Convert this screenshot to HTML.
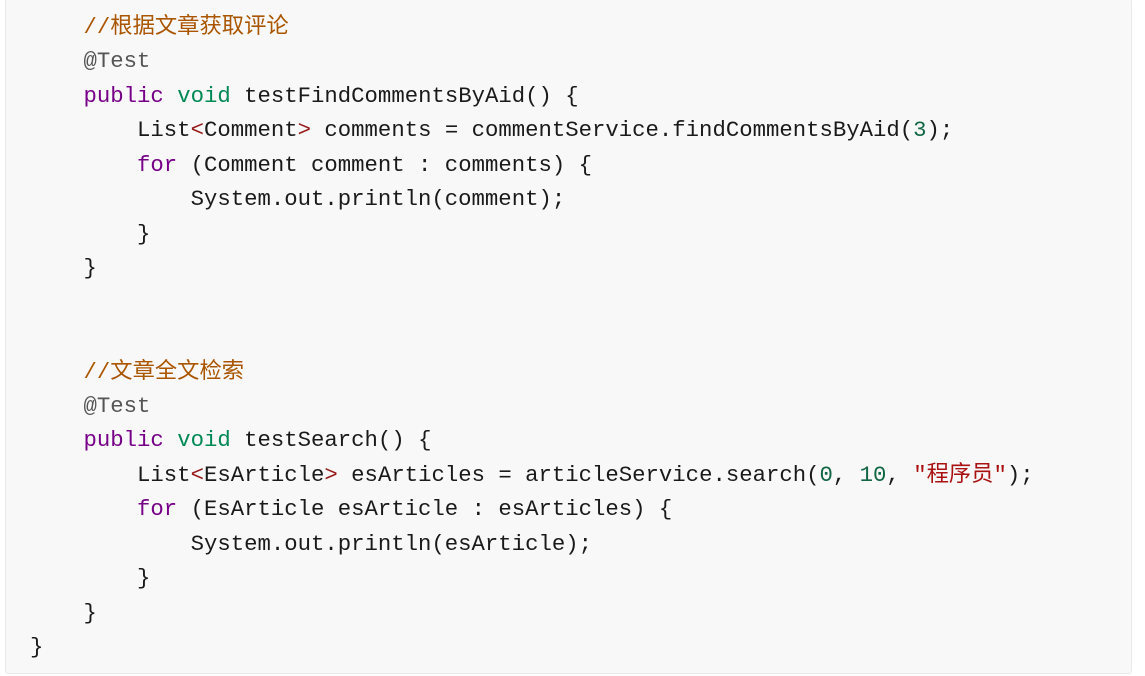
<html><head><style>
body{margin:0;background:#fff;width:1145px;height:676px;overflow:hidden}
.box{position:absolute;left:5px;top:-2px;width:1127px;height:676px;background:#f8f8f8;border:1px solid #e7eaed;border-radius:3px;box-sizing:border-box}
pre{position:absolute;left:30px;top:10px;margin:0;font-family:"Liberation Mono","Noto Sans CJK SC",monospace;font-size:22.3px;line-height:34.45px;color:#1a1a1a}
.c{color:#a50}.k{color:#708}.t{color:#085}.a{color:#555}.s{color:#a11}.n{color:#164}.b{color:#981a1a}
</style></head><body><div class="box"></div>
<pre>    <span class="c">//根据文章获取评论</span>
    <span class="a">@Test</span>
    <span class="k">public</span> <span class="t">void</span> testFindCommentsByAid() {
        List<span class="b">&lt;</span>Comment<span class="b">&gt;</span> comments = commentService.findCommentsByAid(<span class="n">3</span>);
        <span class="k">for</span> (Comment comment : comments) {
            System.out.println(comment);
        }
    }


    <span class="c">//文章全文检索</span>
    <span class="a">@Test</span>
    <span class="k">public</span> <span class="t">void</span> testSearch() {
        List<span class="b">&lt;</span>EsArticle<span class="b">&gt;</span> esArticles = articleService.search(<span class="n">0</span>, <span class="n">10</span>, <span class="s">"程序员"</span>);
        <span class="k">for</span> (EsArticle esArticle : esArticles) {
            System.out.println(esArticle);
        }
    }
}</pre></body></html>
